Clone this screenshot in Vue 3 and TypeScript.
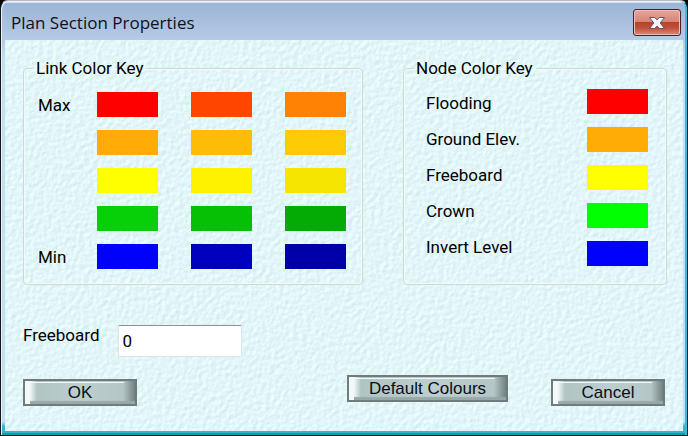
<script setup lang="ts">
import { ref } from 'vue'

interface LinkRow {
  label: string
  colors: string[]
}

interface NodeColor {
  label: string
  color: string
}

const linkRows: LinkRow[] = [
  { label: 'Max', colors: ['#ff0000', '#ff4500', '#ff8205'] },
  { label: '', colors: ['#ffab05', '#fdbc05', '#fccb05'] },
  { label: '', colors: ['#ffff00', '#fff200', '#f5e500'] },
  { label: '', colors: ['#08d008', '#05c005', '#05ab05'] },
  { label: 'Min', colors: ['#0000ff', '#0000bf', '#0000a8'] },
]

const nodeColors: NodeColor[] = [
  { label: 'Flooding', color: '#ff0000' },
  { label: 'Ground Elev.', color: '#ffab05' },
  { label: 'Freeboard', color: '#ffff00' },
  { label: 'Crown', color: '#00ff00' },
  { label: 'Invert Level', color: '#0000ff' },
]

const freeboard = ref('0')
</script>

<template>
  <div class="window">
    <header class="titlebar">
      <h1 class="title">Plan Section Properties</h1>
      <button type="button" class="close" aria-label="Close">
        <svg width="18" height="14" viewBox="0 0 18 14" aria-hidden="true">
          <path
            d="M1.5 1.5h5L9 3.8l2.5-2.3h5L12.2 7l4.3 5.5h-5L9 10.2l-2.5 2.3h-5L5.8 7z"
            fill="#f6f6f6"
            stroke="#585868"
            stroke-width="1"
            stroke-linejoin="round"
          />
        </svg>
      </button>
    </header>

    <form class="body" @submit.prevent>
      <svg class="paper" aria-hidden="true">
        <filter id="paper-grain" x="0" y="0" width="100%" height="100%" color-interpolation-filters="sRGB">
          <feTurbulence type="fractalNoise" baseFrequency="0.22" numOctaves="2" seed="4" />
          <feDiffuseLighting surfaceScale="0.2" diffuseConstant="1.28" lighting-color="#e0f4f6">
            <feDistantLight azimuth="225" elevation="52" />
          </feDiffuseLighting>
        </filter>
        <rect width="100%" height="100%" filter="url(#paper-grain)" />
      </svg>

      <div class="groups">
        <fieldset class="group">
          <legend>Link Color Key</legend>
          <div class="link-rows">
            <div v-for="(row, r) in linkRows" :key="r" class="link-row">
              <span class="row-label">{{ row.label }}</span>
              <button
                v-for="(color, c) in row.colors"
                :key="c"
                type="button"
                class="swatch"
                :aria-label="`Link color ${r * 3 + c + 1}`"
                :style="{ backgroundColor: color }"
              ></button>
            </div>
          </div>
        </fieldset>

        <fieldset class="group">
          <legend>Node Color Key</legend>
          <div class="node-columns">
            <div class="node-labels">
              <label v-for="(node, i) in nodeColors" :key="i" :for="`node-${i}`">{{ node.label }}</label>
            </div>
            <div class="node-swatches">
              <button
                v-for="(node, i) in nodeColors"
                :id="`node-${i}`"
                :key="i"
                type="button"
                class="swatch"
                :style="{ backgroundColor: node.color }"
              ></button>
            </div>
          </div>
        </fieldset>
      </div>

      <div class="field">
        <label for="freeboard">Freeboard</label>
        <input id="freeboard" v-model="freeboard" type="text" />
      </div>

      <div class="actions">
        <button type="submit" class="action ok">OK</button>
        <button type="button" class="action defaults">Default Colours</button>
        <button type="button" class="action">Cancel</button>
      </div>
    </form>
  </div>
</template>

<style>
body {
  background: #000;
}
</style>

<style scoped>
* {
  box-sizing: border-box;
}

.window {
  display: flex;
  flex-direction: column;
  min-height: 100vh;
  padding: 2px 4px 4px;
  border: 1px solid #101820;
  border-top-color: #b8bcc0;
  border-radius: 8px 8px 0 0;
  background: linear-gradient(#f2f6fc 0, #a3bbdc 4px, #b4c9e5 38px, #c3e0f2 60px, #bfe0f0 97%, #38b4c8 98%);
  box-shadow: inset 1px 1px 0 #e8f0fa, inset -2px 0 0 #3cb8dc, inset 0 -2px 0 #189cac;
  color: #000;
  font-family: Roboto, "Liberation Sans", sans-serif;
  font-size: 17px;
  line-height: 20px;
}

.titlebar {
  display: flex;
  align-items: flex-start;
  justify-content: space-between;
  height: 37px;
  padding: 6px 2px 0 6px;
  background: linear-gradient(#9db5d6, #a6bddc 45%, #b7cbe8);
}

.title {
  margin: 0;
  padding-top: 4px;
  color: #101018;
  font: 400 17px/20px "Open Sans", "Noto Sans", sans-serif;
}

.close {
  display: grid;
  place-items: center;
  width: 48px;
  height: 27px;
  padding: 0;
  border: 1px solid #4a2028;
  border-radius: 3px;
  background: linear-gradient(#e4a89c, #d88478 46%, #bc4028 50%, #c0503c 72%, #dc8a78);
  box-shadow: inset 0 0 0 1px #f0bcb4;
}

.body {
  position: relative;
  flex: 1;
  padding: 18px 16px 24px 18px;
  background: #dff4f6;
}

.paper {
  position: absolute;
  inset: 0;
  width: 100%;
  height: 100%;
}

.groups,
.field,
.actions {
  position: relative;
}

.groups {
  display: grid;
  grid-template-columns: 340fr 264fr;
  gap: 40px;
}

.group {
  min-width: 0;
  margin: 0;
  padding: 11px 16px 15px 13px;
  border: 1px solid #ccd8da;
  border-radius: 4px;
  box-shadow: inset 0 0 0 1px #f2fafb;
}

legend {
  margin-left: -4px;
  padding: 0 3px;
}

.link-rows {
  display: grid;
  gap: 13px;
  padding-top: 3px;
}

.link-row {
  display: grid;
  grid-template-columns: 27px repeat(3, 61px);
  justify-content: space-between;
  align-items: center;
}

.row-label {
  padding-left: 1px;
}

.swatch {
  display: block;
  width: 61px;
  height: 25px;
  padding: 0;
  border: 0;
}

.node-columns {
  display: flex;
  justify-content: space-between;
  padding: 0 2px 0 9px;
}

.node-labels {
  display: grid;
  align-content: start;
  gap: 16px;
  padding-top: 4px;
}

.node-swatches {
  display: grid;
  align-content: start;
  gap: 13px;
}

.field {
  display: flex;
  gap: 18px;
  padding-top: 40px;
}

.field input {
  width: 124px;
  height: 32px;
  padding: 0 4px;
  border: 1px solid #dce4e8;
  border-top-color: #8c9098;
  border-radius: 2px;
  background: #fff;
  color: #000;
  font: inherit;
}

.actions {
  display: flex;
  align-items: flex-end;
  gap: 43px;
  height: 49px;
  padding: 18px 2px 0 0;
}

.action {
  width: 114px;
  height: 27px;
  padding: 0;
  border: 2px solid #707c7c;
  background:
    linear-gradient(#f0f8f8, #f0f8f8) 3px 1px / calc(100% - 14px) 1px no-repeat,
    linear-gradient(transparent 84%, #98a8a8 90%) 5px 0 / 100% 100% no-repeat,
    linear-gradient(90deg, #f4fafa 0, #f0f8f8 5px, #b0c4c4 12px, #bccece 50%, #b4c6c6 calc(100% - 12px), #708282);
  color: #080c18;
  font: 17px/20px "Liberation Sans", sans-serif;
}

.ok {
  margin-right: auto;
}

.defaults {
  align-self: flex-start;
  width: 161px;
}
</style>
